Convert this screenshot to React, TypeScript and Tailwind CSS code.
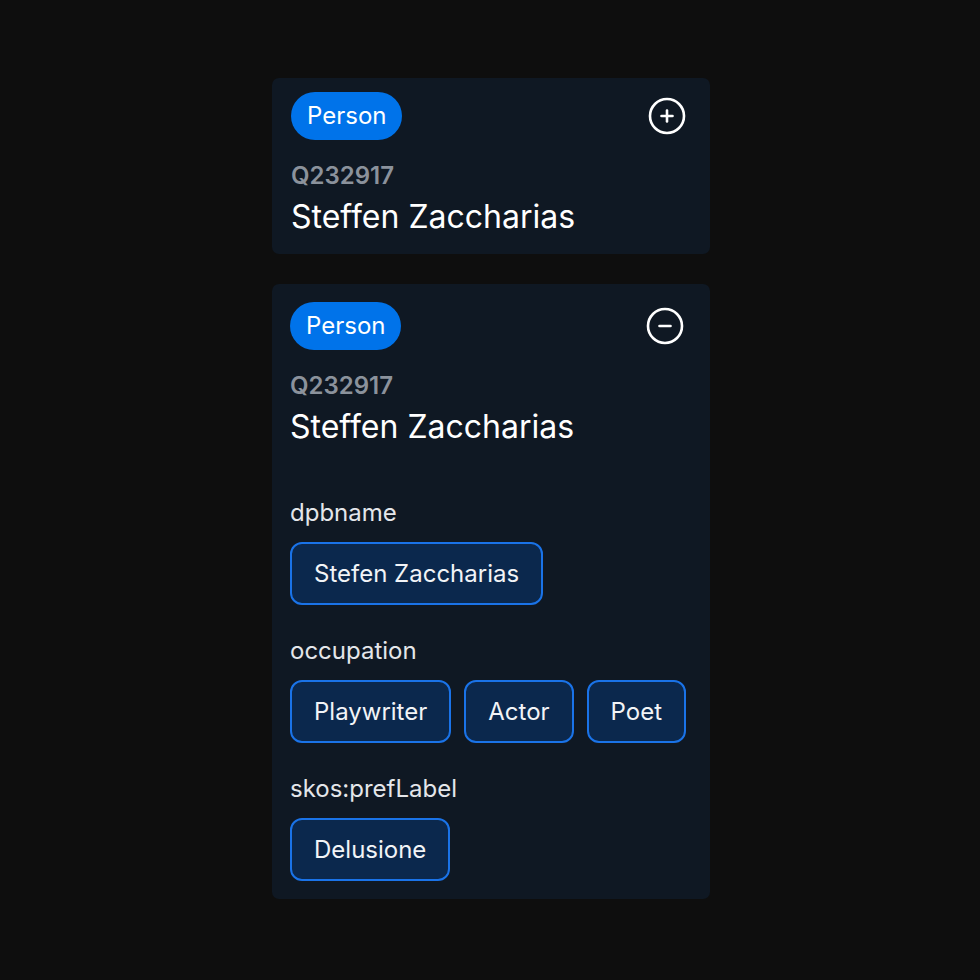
import { useState } from 'react';

type Entity = {
    id: string;
    type: string;
    label: string;
    properties: { name: string; values: string[] }[];
};

const entity: Entity = {
    id: 'Q232917',
    type: 'Person',
    label: 'Steffen Zaccharias',
    properties: [
        { name: 'dpbname', values: ['Stefen Zaccharias'] },
        { name: 'occupation', values: ['Playwriter', 'Actor', 'Poet'] },
        { name: 'skos:prefLabel', values: ['Delusione'] },
    ],
};

function ToggleIcon({ open }: { open: boolean }) {
    return (
        <svg width="40" height="40" viewBox="0 0 40 40" fill="none">
            <circle cx="20" cy="20" r="17" stroke="white" strokeWidth="2.6" />
            <line x1="14.5" y1="20" x2="25.5" y2="20" stroke="white" strokeWidth="2.6" strokeLinecap="round" />
            {!open && (
                <line x1="20" y1="14.5" x2="20" y2="25.5" stroke="white" strokeWidth="2.6" strokeLinecap="round" />
            )}
        </svg>
    );
}

function EntityCard({ item, initialOpen, compact }: { item: Entity; initialOpen: boolean; compact?: boolean }) {
    const [open, setOpen] = useState(initialOpen);

    return (
        <div
            className={
                compact
                    ? 'w-[438px] rounded-[7px] bg-[#0f1823] pb-[18px] pl-[19px] pr-[23px] pt-[14px]'
                    : 'w-[438px] rounded-[7px] bg-[#0f1823] pb-[18px] pl-[18px] pr-[25px] pt-[18px]'
            }
        >
            <div className="flex items-center justify-between">
                <span className="flex h-[48px] items-center rounded-full bg-[#0073ea] px-[16px] text-[24px] text-white">
                    {item.type}
                </span>
                <button type="button" onClick={() => setOpen(!open)}>
                    <ToggleIcon open={open} />
                </button>
            </div>

            <p className="mt-[22px] text-[24px] font-semibold leading-[28px] text-[#8b929c]">
                {item.id}
            </p>
            <p className="mt-[8px] text-[32px] leading-[38px] text-white">
                {item.label}
            </p>

            {open && (
                <div className="mt-[53px] flex flex-col gap-[32px]">
                    {item.properties.map((prop) => (
                        <div key={prop.name} className="flex flex-col gap-[15px]">
                            <p className="text-[24px] leading-[28px] text-[#e4e6ea]">
                                {prop.name}
                            </p>
                            <div className="flex gap-[13px]">
                                {prop.values.map((value) => (
                                    <span
                                        key={value}
                                        className="flex h-[63px] shrink-0 items-center rounded-[12px] border-2 border-[#1a73e8] bg-[#0b284d] px-[22px] text-[24px] text-[#f2f4f7]"
                                    >
                                        {value}
                                    </span>
                                ))}
                            </div>
                        </div>
                    ))}
                </div>
            )}
        </div>
    );
}

export default function App() {
    return (
        <div
            className="flex min-h-[980px] flex-col items-center gap-[30px] bg-[#0e0e0e] pl-[2px] pt-[78px]"
            style={{ fontFamily: 'Inter, "Noto Sans", sans-serif' }}
        >
            <EntityCard item={entity} initialOpen={false} compact />
            <EntityCard item={entity} initialOpen />
        </div>
    );
}
